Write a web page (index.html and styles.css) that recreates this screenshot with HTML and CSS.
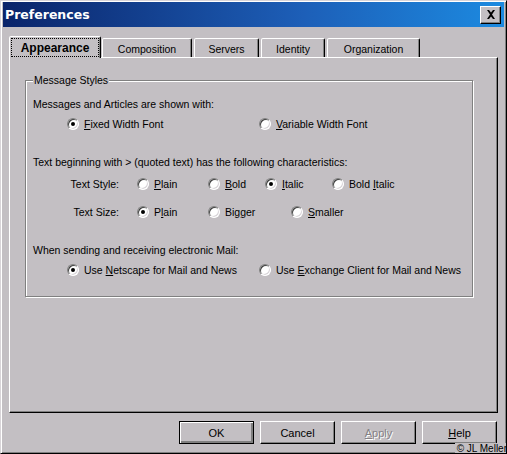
FILE: index.html
```html
<!DOCTYPE html>
<html>
<head>
<meta charset="utf-8">
<title>Preferences</title>
<link rel="stylesheet" href="styles.css">
</head>
<body>
<div class="window">
  <div class="titlebar">
    <span class="title">Preferences</span>
    <span class="close"><svg width="10" height="9" viewBox="0 0 10 9"><path d="M1 0h2l2 2.5 2-2.5h2L6 4.5 9 9H7L5 6.5 3 9H1l3-4.5z" fill="#000"/></svg></span>
  </div>
  <div class="content">
    <div class="tabs">
      <div class="tab active"><span class="focus">Appearance</span></div>
      <div class="tab t-comp">Composition</div>
      <div class="tab t-serv">Servers</div>
      <div class="tab t-ident">Identity</div>
      <div class="tab t-org">Organization</div>
    </div>
    <div class="panel">
      <fieldset class="group">
        <legend>Message Styles</legend>
        <div class="line first">Messages and Articles are shown with:</div>
        <div class="row wide">
          <div class="opt w192"><span class="radio on"></span><span><u>F</u>ixed Width Font</span></div>
          <div class="opt"><span class="radio"></span><span><u>V</u>ariable Width Font</span></div>
        </div>
        <div class="line gap">Text beginning with &gt; (quoted text) has the following characteristics:</div>
        <div class="row style">
          <div class="lbl">Text Style:</div>
          <div class="opt w71"><span class="radio"></span><span><u>P</u>lain</span></div>
          <div class="opt w57"><span class="radio"></span><span><u>B</u>old</span></div>
          <div class="opt w67"><span class="radio on"></span><span><u>I</u>talic</span></div>
          <div class="opt"><span class="radio"></span><span>Bold <u>I</u>talic</span></div>
        </div>
        <div class="row size">
          <div class="lbl">Text Size:</div>
          <div class="opt w71"><span class="radio on"></span><span>P<u>l</u>ain</span></div>
          <div class="opt w83"><span class="radio"></span><span>Bi<u>g</u>ger</span></div>
          <div class="opt"><span class="radio"></span><span><u>S</u>maller</span></div>
        </div>
        <div class="line gap">When sending and receiving electronic Mail:</div>
        <div class="row wide">
          <div class="opt w192"><span class="radio on"></span><span>Use <u>N</u>etscape for Mail and News</span></div>
          <div class="opt"><span class="radio"></span><span>Use <u>E</u>xchange Client for Mail and News</span></div>
        </div>
      </fieldset>
    </div>
    <div class="buttons">
      <div class="btn default">OK</div>
      <div class="btn">Cancel</div>
      <div class="btn disabled"><u>A</u>pply</div>
      <div class="btn"><u>H</u>elp</div>
    </div>
  </div>
  <div class="credit">© JL Meller</div>
</div>
</body>
</html>
```

FILE: styles.css
```css
html, body {
  margin: 0;
  padding: 0;
  background: #c3bfc3;
}

.window {
  position: relative;
  width: 507px;
  height: 454px;
  box-sizing: border-box;
  background: #c3bfc3;
  border: 1px solid;
  border-color: #d8d4d8 #000 #000 #d8d4d8;
  box-shadow: inset 1px 1px 0 #fff, inset -1px -1px 0 #808080;
  padding: 1px 2px 2px 2px;
  font-family: "Liberation Sans", Arial, sans-serif;
  font-size: 10.5px;
  color: #000;
  overflow: hidden;
}

.titlebar {
  height: 25px;
  background: linear-gradient(to right, #0a246a 0%, #1d5fb8 60%, #1c8ae0 100%);
  display: flex;
  align-items: center;
  justify-content: space-between;
  padding: 0 3px 0 2px;
}

.title {
  font-family: "DejaVu Sans", Verdana, sans-serif;
  font-weight: bold;
  font-size: 12.5px;
  color: #fff;
}

.close {
  width: 21px;
  height: 18px;
  box-sizing: border-box;
  background: #c3bfc3;
  border: 1px solid;
  border-color: #fff #000 #000 #fff;
  box-shadow: inset -1px -1px 0 #808080;
  display: flex;
  align-items: center;
  justify-content: center;
  padding-bottom: 1px;
}

.content {
  padding: 9px 6px 0 6px;
}

.tabs {
  display: flex;
  align-items: flex-end;
  height: 21px;
  position: relative;
  z-index: 1;
}

.tab {
  height: 19px;
  box-sizing: border-box;
  border: 1px solid;
  border-bottom: none;
  border-color: #fff #000 transparent #fff;
  box-shadow: inset -1px 0 0 #808080;
  border-radius: 2px 2px 0 0;
  display: flex;
  align-items: center;
  justify-content: center;
  padding-top: 1px;
  background: #c3bfc3;
  margin-left: 2px;
}

.tab.active {
  height: 22px;
  width: 92px;
  margin-left: 0;
  margin-bottom: -1px;
  margin-right: -1px;
  font-weight: bold;
  font-size: 12px;
  padding: 1px 1px 1px 1px;
}

.focus {
  flex: 1;
  align-self: stretch;
  display: flex;
  align-items: center;
  justify-content: center;
  border: 1px dotted #000;
}

.t-comp { width: 90px; }
.t-serv { width: 65px; }
.t-ident { width: 64px; }
.t-org { width: 93px; }

.panel {
  height: 356px;
  box-sizing: border-box;
  border: 1px solid;
  border-color: #fff #000 #000 #fff;
  box-shadow: inset -1px -1px 0 #808080;
  padding: 16px 0 0 15px;
}

.group {
  width: 448px;
  height: 223px;
  box-sizing: border-box;
  margin: 0;
  padding: 0 0 0 7px;
  border: 1px solid #808080;
  box-shadow: 1px 1px 0 #fff, inset 1px 1px 0 #fff;
}

.group legend {
  padding: 0 1px;
  line-height: 12px;
  background: #c3bfc3;
  margin-left: 0;
}

.line {
  line-height: 16px;
  height: 16px;
  white-space: nowrap;
}

.line.first { margin-top: 10px; }
.line.gap { margin-top: 22px; }

.row {
  display: flex;
  align-items: center;
  height: 16px;
  white-space: nowrap;
}

.row.wide {
  margin-top: 4px;
  padding-left: 34px;
}

.row.style { margin-top: 6px; }
.row.size { margin-top: 12px; }

.lbl {
  width: 86px;
  text-align: right;
  margin-right: 18px;
}

.opt {
  display: flex;
  align-items: center;
}

.w192 { width: 192px; }
.w71 { width: 71px; }
.w57 { width: 57px; }
.w67 { width: 67px; }
.w83 { width: 83px; }

.radio {
  position: relative;
  width: 12px;
  height: 12px;
  box-sizing: border-box;
  border-radius: 50%;
  border: 1px solid;
  border-color: #808080 #fff #fff #808080;
  box-shadow: inset 1px 1px 0 #404040, inset -1px -1px 0 #d8d4d8;
  background: #fff;
  margin-right: 5px;
  flex: none;
}

.radio.on::after {
  content: "";
  position: absolute;
  left: 3px;
  top: 3px;
  width: 4px;
  height: 4px;
  border-radius: 50%;
  background: #000;
}

.buttons {
  display: flex;
  justify-content: flex-end;
  gap: 6px;
  margin-top: 8px;
  padding-right: 1px;
}

.btn {
  width: 75px;
  height: 23px;
  box-sizing: border-box;
  border: 1px solid;
  border-color: #fff #000 #000 #fff;
  box-shadow: inset -1px -1px 0 #808080;
  display: flex;
  align-items: center;
  justify-content: center;
  font-size: 11px;
}

.btn.default {
  border: 1px solid #000;
  box-shadow: inset 1px 1px 0 #fff, inset -2px -2px 0 #808080;
}

.btn.disabled {
  color: #858185;
  text-shadow: 1px 1px 0 #fff;
}

.credit {
  position: absolute;
  right: -1px;
  bottom: -2px;
  font-size: 10px;
  line-height: 12px;
  background: #c3bfc3;
  padding-left: 2px;
}
```
